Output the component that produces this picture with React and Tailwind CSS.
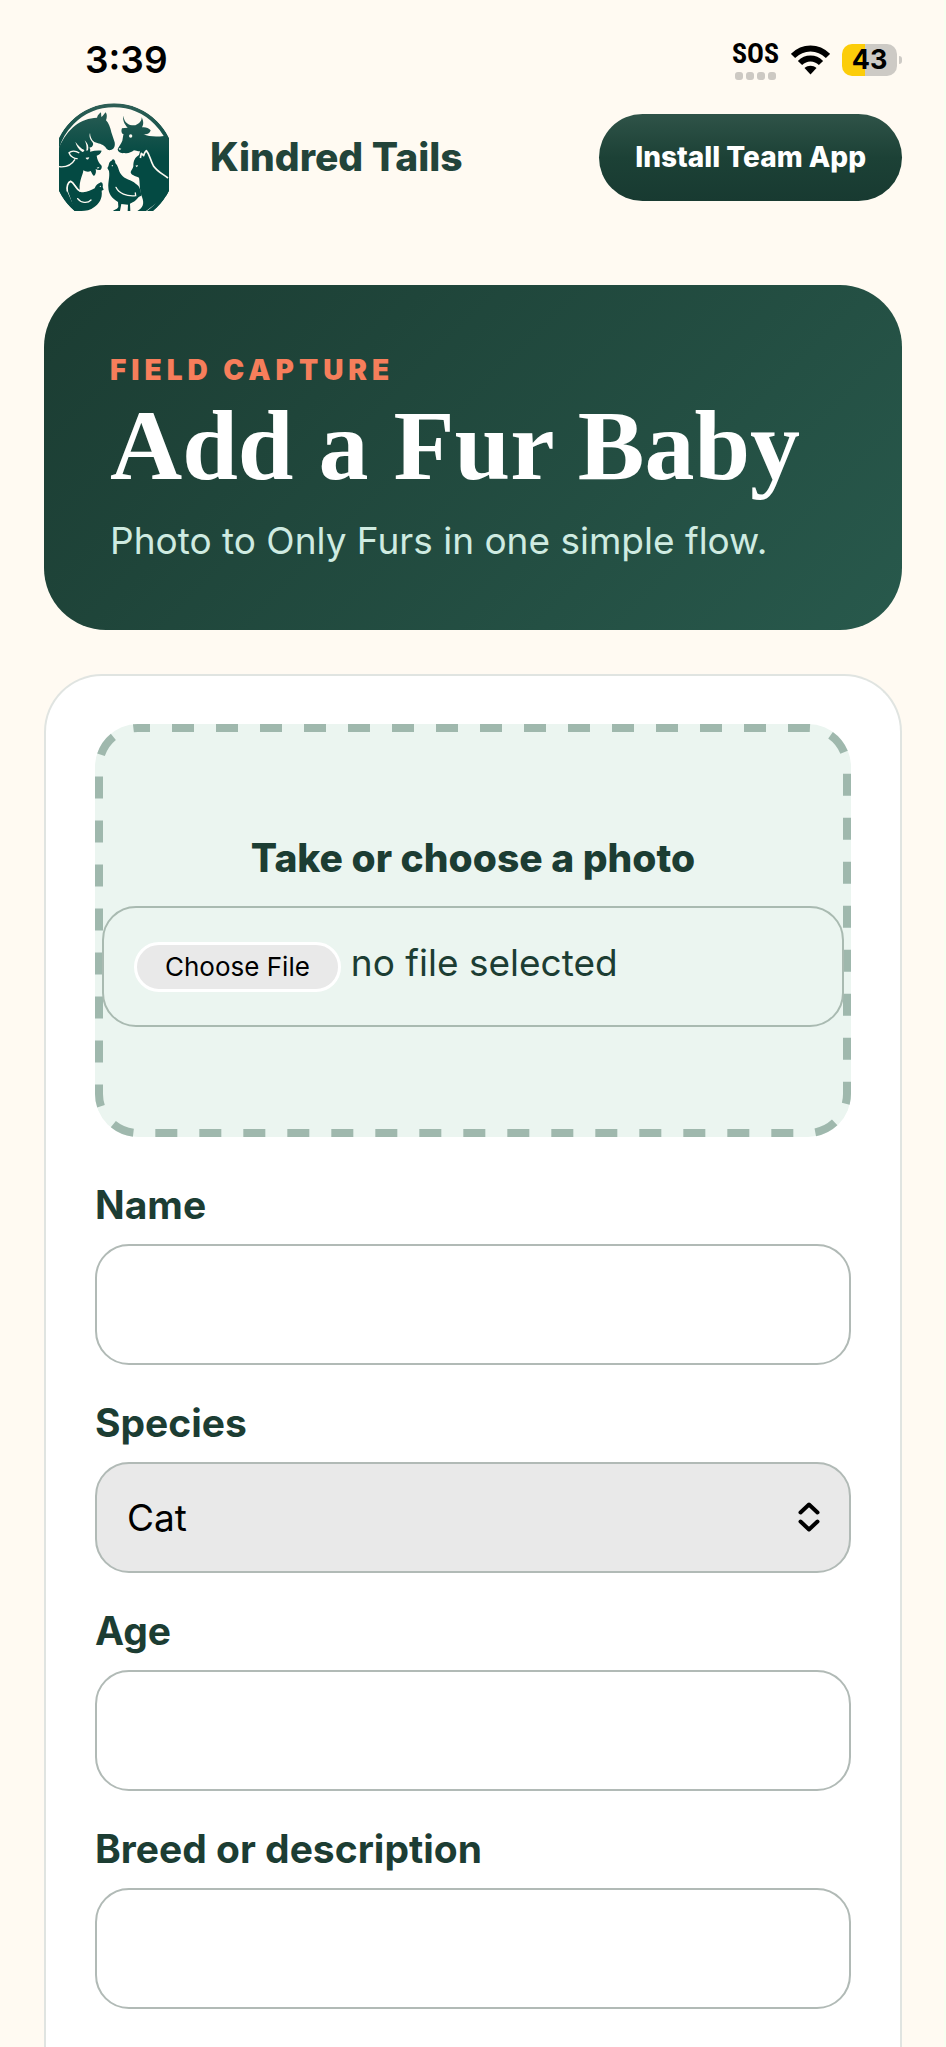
import { useState } from "react";

const SPECIES = ["Cat", "Dog", "Horse", "Goat", "Cow", "Chicken", "Other"];

const labelClass = "block text-[39px] leading-[46px] font-bold text-[#1c3d33] mb-4";
const inputClass =
  "block w-full h-[121px] px-8 text-[37px] text-[#1c3d33] bg-white border-2 border-[#b1bab6] rounded-[34px] outline-none focus:border-[#1c3d33]";

function Logo() {
  return (
    <svg viewBox="57 38 330 324" className="w-[110px] h-[108px] shrink-0" role="img" aria-label="Kindred Tails logo">
      <defs>
        <linearGradient id="logoFill" x1="0" y1="38" x2="0" y2="200" gradientUnits="userSpaceOnUse">
          <stop offset="0" stopColor="#2f5f56" />
          <stop offset="1" stopColor="#044a43" />
        </linearGradient>
        <clipPath id="logoClip">
          <circle cx="222" cy="222" r="183" />
        </clipPath>
      </defs>
      <g clipPath="url(#logoClip)">
        <circle cx="222" cy="222" r="177" fill="none" stroke="url(#logoFill)" strokeWidth="12" />
        {/* horse, goat and left shoulder */}
        <path
          fill="url(#logoFill)"
          d="M57 172C84 112 122 84 171 82C173 74 178 70 183 66L184 80C190 77 192 71 197 66C202 72 201 82 198 90C206 98 211 112 214 126L224 156C226 168 222 177 213 179C205 181 199 176 196 170C187 160 175 160 163 155C154 149 151 139 150 128C146 138 151 148 157 155C161 160 160 165 155 170L148 172C152 176 151 180 150 184C162 181 172 180 185 181C183 189 177 193 170 196C171 206 175 213 180 221C187 226 187 232 182 238C176 240 171 238 167 236C169 244 168 252 162 257C157 254 155 247 152 242C144 246 136 243 130 240C129 255 117 270 119 299C108 292 101 272 91 271C82 277 81 292 81 302L108 362H57Z"
        />
        <path fill="none" stroke="#fdf9f1" strokeWidth="4" d="M57 229C82 232 96 222 105 207" />
        <path fill="none" stroke="#fdf9f1" strokeWidth="4" d="M118 188C107 181 94 181 87 187C91 199 104 206 113 205" />
        <path fill="#fdf9f1" d="M106 154C109 167 116 177 127 185C132 184 133 181 133 179C123 174 114 166 106 154ZM134 150C144 160 147 169 144 180L139 181C141 170 139 160 134 150Z" />
        <path fill="#fdf9f1" d="M137 202L148 201L145 207C141 208 138 206 137 202ZM170 232L179 229L174 235Z" />
        {/* cow and right shoulder */}
        <path
          fill="url(#logoFill)"
          d="M250 76C252 92 260 102 276 105H286C298 100 305 93 305 81C310 90 312 102 306 111C316 109 326 113 332 120C330 130 320 133 310 131C326 139 347 140 372 137L387 145V310L318 362H292C308 352 314 342 306 320C298 300 300 278 297 262C286 257 272 254 272 245C274 239 279 235 280 228C280 211 285 201 297 194L300 183C292 183 286 181 282 180C273 186 265 190 253 188C242 190 233 185 233 177C235 169 243 162 247 151C249 143 249 135 251 132C244 131 243 121 246 114L263 112C254 102 247 89 250 76Z"
        />
        <path fill="none" stroke="#fdf9f1" strokeWidth="5" strokeLinejoin="round" d="M301 203L304 189L311 196C313 188 315 183 319 181C330 193 330 208 340 226C352 244 366 249 384 263" />
        <circle cx="272" cy="137" r="5" fill="#fdf9f1" />
        <path fill="#fdf9f1" d="M236 173L244 175L239 180ZM286 226L294 224L291 231Z" />
        {/* hen */}
        <path
          fill="#044a43"
          d="M84 303C81 289 84 277 92 274C103 280 108 296 121 305C137 309 153 300 164 294C168 283 174 279 180 277C187 272 190 283 188 290L191 298L185 301C188 325 177 340 163 350C152 359 137 362 124 362H105Z"
        />
        <path fill="none" stroke="#fdf9f1" strokeWidth="5" d="M82 303C79 288 84 275 92 273C104 278 107 297 121 303" />
        <path fill="none" stroke="#fdf9f1" strokeWidth="4" strokeLinecap="round" d="M113 325C122 338 143 340 153 329" />
        <circle cx="181" cy="288" r="2" fill="#fdf9f1" />
        {/* rooster */}
        <path
          fill="#044a43"
          d="M202 233C207 226 206 221 208 217C211 211 216 213 218 207C223 206 226 212 226 218C235 226 236 243 243 252C254 268 274 268 287 280C299 286 303 301 304 316C293 319 292 328 278 336L270 340L271 362H263L264 343L244 341L240 362H219C224 357 231 358 235 350L234 335C216 325 205 310 205 291C204 274 210 260 207 242Z"
        />
        <path fill="none" stroke="#fdf9f1" strokeWidth="4" strokeLinecap="round" d="M228 291C236 309 260 319 287 316L286 308" />
        <circle cx="217" cy="226" r="2" fill="#fdf9f1" />
      </g>
    </svg>
  );
}

function StatusBar() {
  return (
    <div className="flex items-center justify-between pl-[85px] pr-[42px] pt-[37px] text-black">
      <span className="text-[37px] leading-[46px] font-semibold">3:39</span>
      <div className="flex items-center gap-3">
        <div className="flex flex-col items-center gap-1">
          <span className="text-[28px] leading-[28px] font-bold font-['Liberation_Sans_Narrow','Roboto_Condensed','Roboto',sans-serif]">SOS</span>
          <div className="flex gap-[3px]">
            {[0, 1, 2, 3].map((dot) => (
              <span key={dot} className="size-2 rounded-[3px] bg-[#cdc9c3]" />
            ))}
          </div>
        </div>
        <svg viewBox="0 0 39 30" className="w-[39px] h-[30px]" aria-label="Wi-Fi">
          <path d="M2 11C12 1 27 1 37 11" fill="none" stroke="#000" strokeWidth="6" />
          <path d="M9 18C15 12 24 12 30 18" fill="none" stroke="#000" strokeWidth="6" />
          <path d="M13.500 23C17 20 22 20 25.500 23L19.500 29.500Z" fill="#000" />
        </svg>
        <div className="flex items-center gap-[2px]">
          <div className="flex h-8 w-[55px] items-center justify-center rounded-[10px] bg-[linear-gradient(90deg,#fccd0a_42%,#cdcac5_42%)]">
            <span className="text-[27px] leading-8 font-bold">43</span>
          </div>
          <span className="h-2 w-[3px] rounded-r-full bg-[#cdcac5]" />
        </div>
      </div>
    </div>
  );
}

function Field({ id, label, value, onChange }) {
  return (
    <div>
      <label htmlFor={id} className={labelClass}>{label}</label>
      <input id={id} name={id} type="text" value={value} onChange={onChange} className={inputClass} />
    </div>
  );
}

export default function App() {
  const [fileName, setFileName] = useState("");
  const [form, setForm] = useState({ name: "", species: "Cat", age: "", breed: "" });

  const handleChange = (e) => {
    setForm({ ...form, [e.target.name]: e.target.value });
  };

  const handleFile = (e) => {
    setFileName(e.target.files[0]?.name || "");
  };

  return (
    <div className="min-h-screen flex flex-col bg-[#fffaf2] border-r-2 border-[#f7fff0] font-['Inter','Liberation_Sans',sans-serif]">
      <StatusBar />

      <header className="flex items-center pl-[59px] pr-[42px] pt-5">
        <Logo />
        <span className="ml-[41px] text-[39px] leading-[46px] font-extrabold text-[#22443a]">Kindred Tails</span>
        <button
          type="button"
          className="ml-auto h-[87px] px-9 rounded-full bg-linear-to-b from-[#2f5348] via-[#1c4136] to-[#183a31] text-[28px] font-extrabold text-white"
        >
          Install Team App
        </button>
      </header>

      <main className="flex-1 flex flex-col pl-11 pr-[42px] pt-[74px]">
        <section className="rounded-[62px] bg-linear-135 from-[#1b3c32] to-[#28594c] px-[66px] pt-[68px] pb-[66px]">
          <p className="text-[28px] leading-[34px] font-black tracking-[5px] uppercase text-[#f67e5b]">Field capture</p>
          <h1 className="mt-[9px] text-[100px] leading-[100px] font-bold text-white font-['Liberation_Serif',serif]">Add a Fur Baby</h1>
          <p className="mt-[22px] text-[37px] leading-[46px] text-[#cfebe1]">Photo to Only Furs in one simple flow.</p>
        </section>

        <form className="flex-1 mt-11 rounded-t-[58px] border-2 border-b-0 border-[#e0e4e1] bg-white px-[49px] pt-12 pb-6">
          <div className="relative rounded-[43px] bg-[#ebf5f0] px-[7px] pt-[111px] pb-[110px]">
            <svg className="absolute inset-1 size-[calc(100%-8px)] overflow-visible" aria-hidden="true">
              <rect width="100%" height="100%" rx="39" fill="none" stroke="#9fb8ad" strokeWidth="8" strokeDasharray="22 22" strokeDashoffset="10" />
            </svg>
            <label htmlFor="photo" className="block text-center text-[39px] leading-[46px] font-extrabold text-[#1c3d33]">
              Take or choose a photo
            </label>
            <label
              htmlFor="photo"
              className="relative mt-[25px] flex h-[121px] items-baseline gap-[10px] rounded-[34px] border-2 border-[#a9bab1] px-[30px] pt-8 text-[#1c3d33] cursor-pointer"
            >
              <span className="flex h-[50px] items-center rounded-full border-3 border-white bg-[#e9e9e9] px-7 text-[26px] text-black">
                Choose File
              </span>
              <span className="text-[37px] leading-[46px]">{fileName || "no file selected"}</span>
              <input id="photo" type="file" accept="image/*" onChange={handleFile} className="sr-only" />
            </label>
          </div>

          <div className="mt-[45px] space-y-[35px]">
            <Field id="name" label="Name" value={form.name} onChange={handleChange} />
            <div>
              <label htmlFor="species" className={labelClass}>Species</label>
              <div className="relative">
                <select
                  id="species"
                  name="species"
                  value={form.species}
                  onChange={handleChange}
                  className="block w-full h-[111px] appearance-none rounded-[34px] border-2 border-[#b1bab6] bg-[#e9e9e9] px-[30px] text-[37px] text-black outline-none"
                >
                  {SPECIES.map((s) => (
                    <option key={s}>{s}</option>
                  ))}
                </select>
                <svg viewBox="0 0 22 30" className="pointer-events-none absolute right-[31px] top-10 h-[30px] w-[22px]" fill="none" stroke="#000" strokeWidth="4" strokeLinecap="round" strokeLinejoin="round">
                  <path d="M2.500 10.500L11 2.500L19.500 10.500M2.500 19.500L11 27.500L19.500 19.500" />
                </svg>
              </div>
            </div>
            <Field id="age" label="Age" value={form.age} onChange={handleChange} />
            <Field id="breed" label="Breed or description" value={form.breed} onChange={handleChange} />
          </div>
        </form>
      </main>
    </div>
  );
}
